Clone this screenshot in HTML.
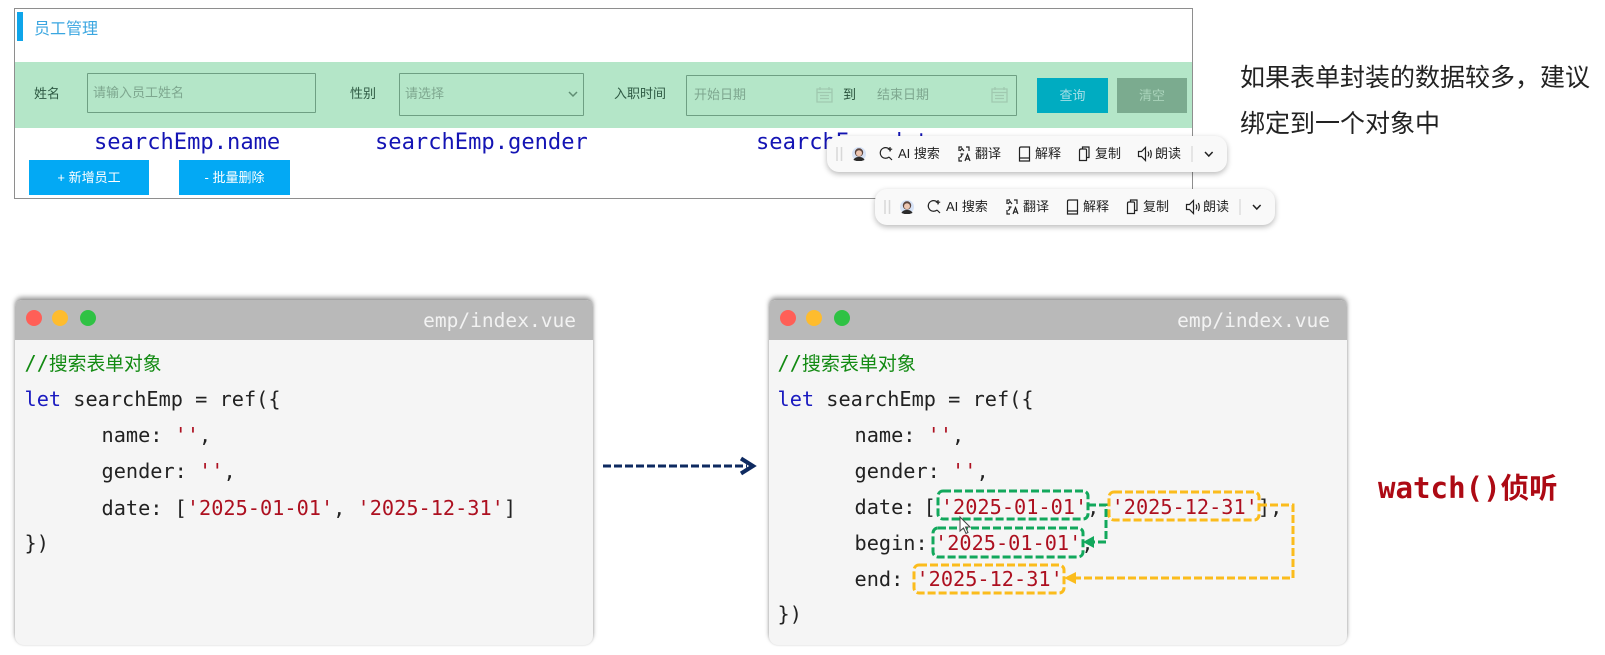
<!DOCTYPE html>
<html lang="zh">
<head>
<meta charset="utf-8">
<title>员工管理</title>
<style>
html,body{margin:0;padding:0;background:#fff;width:1605px;height:655px;overflow:hidden}
body{position:relative;font-family:"Liberation Sans","Noto Sans CJK SC",sans-serif}
.a{position:absolute;box-sizing:border-box}
.t{position:absolute;white-space:pre}
.lab{font-size:13px;line-height:20px;color:#2f5a44}
.ph{font-size:13px;line-height:20px;color:#7ea78f}
.box{position:absolute;box-sizing:border-box;border:1.5px solid #6e9f83;border-radius:1px}
.btn{position:absolute;font-size:13px;text-align:center;color:#fff}
.mono{font-family:"DejaVu Sans Mono","Noto Sans CJK SC",monospace}
.field{font-size:22.1px;line-height:26px;color:#1414b4}
.card{position:absolute;top:300px;width:578px;height:345px;background:#f5f5f5;border-radius:7px 7px 9px 9px;box-shadow:0 -3px 5px rgba(0,0,0,.38),0 0 2px rgba(0,0,0,.14);overflow:hidden}
.bar{position:absolute;left:0;top:0;width:100%;height:40px;background:#b9b9b9}
.dot{position:absolute;top:10px;width:16px;height:16px;border-radius:50%}
.fn{position:absolute;right:17px;top:8px;font-size:19.55px;line-height:26px;color:#f2f2f2}
.c{position:absolute;left:9.5px;font-size:20.25px;line-height:36px;color:#222;white-space:pre}
.r .c{left:8.5px}
.r .i{left:85.5px}
.k{color:#1a1ac0}.s{color:#ad1020}.g{color:#128a12}
.z{font-size:18.8px}
.r .z{font-size:19px}
.tb{position:absolute;width:400px;height:36px;background:#f9f9f9;border-radius:12px;box-shadow:0 2px 6px rgba(0,0,0,.28)}
.tb span{position:absolute;top:8px;font-size:13px;line-height:20px;color:#222;white-space:pre}
.tb svg{position:absolute;left:0;top:0}
</style>
</head>
<body>

<!-- top panel -->
<div class="a" style="left:14px;top:8px;width:1179px;height:191px;border:1px solid #8e8e8e"></div>
<div class="a" style="left:17px;top:12px;width:6px;height:29px;background:#0ea5ea"></div>
<div class="t" style="left:34px;top:18px;font-size:16px;line-height:24px;color:#3aa6e0">员工管理</div>
<div class="a" style="left:15px;top:62px;width:1177px;height:66px;background:#b4e6c8"></div>

<div class="t lab" style="left:34px;top:84px">姓名</div>
<div class="box" style="left:87px;top:73px;width:229px;height:40px"></div>
<div class="t ph" style="left:93px;top:83px">请输入员工姓名</div>

<div class="t lab" style="left:350px;top:84px">性别</div>
<div class="box" style="left:399px;top:73px;width:185px;height:43px"></div>
<div class="t ph" style="left:405px;top:84px">请选择</div>
<svg class="a" style="left:567px;top:90px" width="12" height="8" viewBox="0 0 12 8"><path d="M2 2l4 4 4-4" fill="none" stroke="#5f8d73" stroke-width="1.5"/></svg>

<div class="t lab" style="left:614px;top:84px">入职时间</div>
<div class="box" style="left:686px;top:75px;width:331px;height:41px"></div>
<div class="t ph" style="left:694px;top:85px">开始日期</div>
<svg class="a" style="left:816px;top:86px" width="17" height="17" viewBox="0 0 17 17"><path d="M1 3h15v13H1zM1 6.5h15M4 1v3M13 1v3M4 9.5h9M4 12.500h9" fill="none" stroke="#a0c9b0" stroke-width="1.3"/></svg>
<div class="t" style="left:843px;top:85px;font-size:13px;line-height:20px;color:#27503a">到</div>
<div class="t ph" style="left:877px;top:85px">结束日期</div>
<svg class="a" style="left:991px;top:86px" width="17" height="17" viewBox="0 0 17 17"><path d="M1 3h15v13H1zM1 6.5h15M4 1v3M13 1v3M4 9.5h9M4 12.500h9" fill="none" stroke="#a0c9b0" stroke-width="1.3"/></svg>

<div class="btn" style="left:1037px;top:78px;width:71px;height:35px;line-height:35px;background:#00acc1;color:#a5dfe6">查询</div>
<div class="btn" style="left:1117px;top:78px;width:70px;height:35px;line-height:35px;background:#7bab8f;color:#a9d3ba">清空</div>

<div class="t mono field" style="left:94px;top:129px">searchEmp.name</div>
<div class="t mono field" style="left:375px;top:129px">searchEmp.gender</div>
<div class="t mono field" style="left:756px;top:129px">searchEmp.date</div>

<div class="btn" style="left:29px;top:160px;width:120px;height:35px;line-height:35px;background:#03a9f4">+ 新增员工</div>
<div class="btn" style="left:179px;top:160px;width:111px;height:35px;line-height:35px;background:#03a9f4">- 批量删除</div>

<!-- toolbars -->
<div class="tb" style="left:827px;top:136px">
<svg width="400" height="36" viewBox="0 0 400 36" fill="none" stroke="#222" stroke-width="1.2">
<path d="M10 11v14M14.500 11v14" stroke="#d8d8d8" stroke-width="1.5"/>
<circle cx="32" cy="18" r="7" fill="#d6e2f6" stroke="none"/>
<path d="M26.500 24c1-2.500 3-3 5.500-3s4.500.5 5.500 3l-3 1h-5z" fill="#2b2b2b" stroke="none"/>
<circle cx="32" cy="16.500" r="4.200" fill="#5a443e" stroke="none"/><circle cx="32" cy="17.300" r="3" fill="#edc6b2" stroke="none"/>
<path d="M63.500 15a5.300 5.300 0 1 0-1.500 6M62 21l3 3M63 11v4.500M60.800 13.200h4.400"/>
<path d="M132 15v-4h3M142 15v-4h-3M132 21v4h3M142 25h0M133 15l2-2.500 2 2.500M133.500 18h3M135 18c0 2-1 3-2 3.500M138 25l2.500-6.500 2.500 6.500M139 23h3"/>
<path d="M192.500 12.500q0-1.500 1.500-1.500h8.500v14h-10zM192.500 22h10" />
<path d="M255.500 12.500v-1.500h6.500v10.500h-2.500M252.500 14.500q0-1.500 1.500-1.500h4.500q1 0 1 1v10.500h-7z"/>
<path d="M311.500 15.500h3l4-4v13l-4-4h-3zM321 15.500q1.500 2.500 0 5M323.300 14q2 4 0 8"/>
<path d="M365 10v16" stroke="#d8d8d8"/>
<path d="M378 16l3.800 4 3.800-4" stroke-width="1.500"/>
</svg>
<span style="left:71px">AI 搜索</span><span style="left:148px">翻译</span><span style="left:208px">解释</span><span style="left:268px">复制</span><span style="left:328px">朗读</span>
</div>
<div class="tb" style="left:875px;top:189px">
<svg width="400" height="36" viewBox="0 0 400 36" fill="none" stroke="#222" stroke-width="1.2">
<path d="M10 11v14M14.500 11v14" stroke="#d8d8d8" stroke-width="1.5"/>
<circle cx="32" cy="18" r="7" fill="#d6e2f6" stroke="none"/>
<path d="M26.500 24c1-2.500 3-3 5.500-3s4.500.5 5.500 3l-3 1h-5z" fill="#2b2b2b" stroke="none"/>
<circle cx="32" cy="16.500" r="4.200" fill="#5a443e" stroke="none"/><circle cx="32" cy="17.300" r="3" fill="#edc6b2" stroke="none"/>
<path d="M63.500 15a5.300 5.300 0 1 0-1.500 6M62 21l3 3M63 11v4.500M60.800 13.200h4.400"/>
<path d="M132 15v-4h3M142 15v-4h-3M132 21v4h3M142 25h0M133 15l2-2.500 2 2.500M133.500 18h3M135 18c0 2-1 3-2 3.500M138 25l2.500-6.500 2.500 6.500M139 23h3"/>
<path d="M192.500 12.500q0-1.500 1.500-1.500h8.500v14h-10zM192.500 22h10" />
<path d="M255.500 12.500v-1.500h6.500v10.500h-2.500M252.500 14.500q0-1.500 1.500-1.500h4.500q1 0 1 1v10.500h-7z"/>
<path d="M311.500 15.500h3l4-4v13l-4-4h-3zM321 15.500q1.500 2.500 0 5M323.300 14q2 4 0 8"/>
<path d="M365 10v16" stroke="#d8d8d8"/>
<path d="M378 16l3.800 4 3.800-4" stroke-width="1.500"/>
</svg>
<span style="left:71px">AI 搜索</span><span style="left:148px">翻译</span><span style="left:208px">解释</span><span style="left:268px">复制</span><span style="left:328px">朗读</span>
</div>

<!-- right note -->
<div class="t" style="left:1240px;top:54.500px;font-size:25px;line-height:46px;color:#222">如果表单封装的数据较多&#65292;建议
绑定到一个对象中</div>

<!-- left code card -->
<div class="card mono" style="left:15px">
<div class="bar"></div>
<div class="dot" style="left:11px;background:#ff5f57"></div>
<div class="dot" style="left:37px;background:#febc2e"></div>
<div class="dot" style="left:65px;background:#2fc244"></div>
<div class="fn">emp/index.vue</div>
<div class="c g" style="top:45px">//<span class="z">搜索表单对象</span></div>
<div class="c" style="top:81px"><span class="k">let</span> searchEmp = ref({</div>
<div class="c" style="top:117px;left:86.500px">name: <span class="s">''</span>,</div>
<div class="c" style="top:153px;left:86.500px">gender: <span class="s">''</span>,</div>
<div class="c" style="top:190px;left:86.500px">date: [<span class="s">'2025-01-01'</span>, <span class="s">'2025-12-31'</span>]</div>
<div class="c" style="top:225px">})</div>
</div>

<!-- arrow -->
<svg class="a" style="left:600px;top:455px" width="160" height="24" viewBox="0 0 160 24">
<path d="M3 11h144" stroke="#0e2a60" stroke-width="3" stroke-dasharray="8 3" fill="none"/>
<path d="M141 3.500l12 7.500-12 7.500" fill="none" stroke="#0e2a60" stroke-width="4"/>
</svg>

<!-- right code card -->
<div class="card mono r" style="left:769px">
<div class="bar"></div>
<div class="dot" style="left:11px;background:#ff5f57"></div>
<div class="dot" style="left:37px;background:#febc2e"></div>
<div class="dot" style="left:65px;background:#2fc244"></div>
<div class="fn">emp/index.vue</div>
<div class="c g" style="top:45px">//<span class="z">搜索表单对象</span></div>
<div class="c" style="top:81px"><span class="k">let</span> searchEmp = ref({</div>
<div class="c i" style="top:117px">name: <span class="s">''</span>,</div>
<div class="c i" style="top:153px">gender: <span class="s">''</span>,</div>
<div class="c i" style="top:189px">date: <span style="margin-left:-4px">[</span><span class="s" style="margin-left:5px">'2025-01-01'</span>, <span class="s">'2025-12-31'</span>],</div>
<div class="c i" style="top:225px">begin:</div>
<div class="c" style="top:225px;left:166px"><span class="s">'2025-01-01'</span>,</div>
<div class="c i" style="top:261px">end: <span class="s" style="margin-left:1px">'2025-12-31'</span></div>
<div class="c" style="top:296px">})</div>
</div>

<!-- dashed annotations -->
<svg class="a" style="left:0;top:0" width="1605" height="655" viewBox="0 0 1605 655" fill="none">
<g stroke="#12a85c" stroke-width="3" stroke-dasharray="8 3">
<rect x="938" y="491" width="150" height="28" rx="5"/>
<rect x="933" y="528" width="150" height="29" rx="5"/>
<path d="M1088 505h18v37h-14"/>
</g>
<path d="M1083 542l11-6v12z" fill="#12a85c"/>
<g stroke="#fbbc1c" stroke-width="3" stroke-dasharray="8 3">
<rect x="1109" y="492" width="150" height="28" rx="5"/>
<rect x="914" y="565" width="150" height="28" rx="5"/>
<path d="M1259 505h34v73H1074"/>
</g>
<path d="M1064 578l12-6v12z" fill="#fbbc1c"/>
<path d="M960 517v14l3.500-3 2.500 5.500 2-1-2.500-5.500h4.500z" fill="#fff" stroke="#444" stroke-width="1"/>
</svg>

<!-- watch -->
<div class="t mono" style="left:1378px;top:470px;font-size:29.100px;line-height:34px;font-weight:bold;color:#ad0a14">watch()<span style="font-family:'Noto Sans CJK SC',sans-serif;font-size:28.500px">侦听</span></div>

</body>
</html>
